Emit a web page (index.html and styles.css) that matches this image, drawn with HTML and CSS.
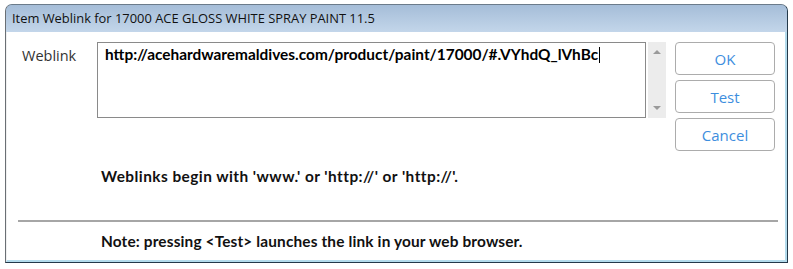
FILE: index.html
```html
<!DOCTYPE html>
<html>
<head>
<meta charset="utf-8">
<link rel="stylesheet" href="styles.css">
</head>
<body>
<div class="strip"></div>
<div class="window">
  <div class="titlebar">Item Weblink for 17000 ACE GLOSS WHITE SPRAY PAINT 11.5</div>
  <div class="content">
    <div class="toprow">
      <div class="label">Weblink</div>
      <div class="field">
        <div class="textbox">http://acehardwaremaldives.com/product/paint/17000/#.VYhdQ_lVhBc<span class="caret"></span></div>
        <div class="scrollbar">
          <svg class="arrow" width="8" height="5" viewBox="0 0 8 5"><path d="M0 5 L4 1 L8 5 Z" fill="#9a9a9a"/></svg>
          <svg class="arrow" width="8" height="5" viewBox="0 0 8 5"><path d="M0 0 L4 4 L8 0 Z" fill="#9a9a9a"/></svg>
        </div>
      </div>
      <div class="buttons">
        <div class="btn">OK</div>
        <div class="btn">Test</div>
        <div class="btn">Cancel</div>
      </div>
    </div>
    <div class="hint">Weblinks begin with 'www.' or 'http://' or 'http://'.</div>
    <div class="sep"></div>
    <div class="note">Note: pressing &lt;Test&gt; launches the link in your web browser.</div>
  </div>
</div>
</body>
</html>
```
FILE: styles.css
```css
html, body {
  margin: 0;
  padding: 0;
  background: #ffffff;
}
body {
  width: 793px;
  height: 269px;
  overflow: hidden;
}
.strip {
  height: 4px;
}
.window {
  margin-left: 5px;
  width: 783px;
  height: 259px;
  box-sizing: border-box;
  border: 1px solid #24394a;
  border-left-color: #6a6f74;
  border-top-color: #6b7b8a;
  border-radius: 7px 7px 0 0;
  background: #a7bfd9;
  display: flex;
  flex-direction: column;
  overflow: hidden;
}
.titlebar {
  height: 27px;
  flex: none;
  box-sizing: border-box;
  padding: 5px 0 0 6px;
  background: linear-gradient(#a5bdd8, #c3d6ea);
  font-family: "Open Sans", sans-serif;
  font-size: 12.9px;
  line-height: 16px;
  color: #111;
  white-space: nowrap;
}
.content {
  flex: 1;
  background: #ffffff;
  border-right: 2px solid #b3dbec;
  border-bottom: 2px solid #b3dbec;
  border-left: 1px solid #f0f0f0;
  display: flex;
  flex-direction: column;
}
.toprow {
  display: flex;
  margin-top: 10px;
}
.label {
  width: 75px;
  padding-left: 15px;
  padding-top: 4px;
  font-family: "Open Sans", sans-serif;
  font-size: 14.5px;
  color: #333;
}
.field {
  display: flex;
  height: 76px;
}
.textbox {
  width: 549px;
  height: 76px;
  box-sizing: border-box;
  border: 1px solid #8a8a8a;
  padding: 2px 0 0 7px;
  font-family: "Lato", sans-serif;
  font-weight: bold;
  font-size: 15.4px;
  line-height: 18px;
  color: #000;
  white-space: nowrap;
}
.caret {
  display: inline-block;
  width: 0;
  height: 16px;
  border-left: 1px solid #000;
  vertical-align: -3px;
  margin-left: 1px;
}
.scrollbar {
  width: 18px;
  margin-left: 2px;
  background: #ececec;
  display: flex;
  flex-direction: column;
  justify-content: space-between;
  align-items: center;
  padding: 7px 0 7px;
  box-sizing: border-box;
}
.arrow {
  display: block;
}
.buttons {
  margin-left: 9px;
  display: flex;
  flex-direction: column;
  gap: 5px;
}
.btn {
  width: 100px;
  height: 33px;
  box-sizing: border-box;
  border: 1px solid #acacac;
  border-radius: 4px;
  background: #fff;
  font-family: "Open Sans", sans-serif;
  font-size: 15px;
  color: #3d8ede;
  display: flex;
  align-items: center;
  justify-content: center;
}
.hint {
  margin-top: 16px;
  padding-left: 94px;
  font-family: "Lato", sans-serif;
  font-weight: bold;
  font-size: 15.4px;
  letter-spacing: 0.45px;
  line-height: 18px;
  color: #111;
}
.sep {
  margin: 35px 0 0 11px;
  width: 760px;
  height: 2px;
  background: #a6a6a6;
}
.note {
  margin-top: 10px;
  padding-left: 94px;
  font-family: "Lato", sans-serif;
  font-weight: bold;
  font-size: 15.4px;
  letter-spacing: 0.15px;
  line-height: 18px;
  color: #111;
}
```
